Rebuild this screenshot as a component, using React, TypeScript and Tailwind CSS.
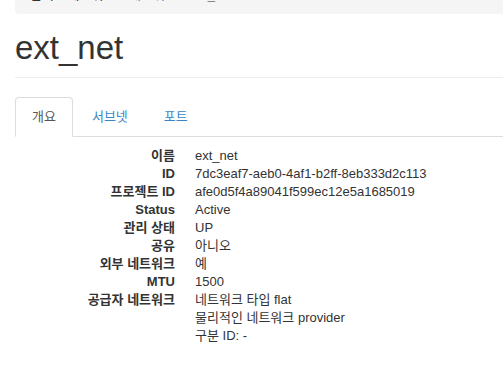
import React from 'react';

const rows: { label: string; values: string[] }[] = [
  { label: '이름', values: ['ext_net'] },
  { label: 'ID', values: ['7dc3eaf7-aeb0-4af1-b2ff-8eb333d2c113'] },
  { label: '프로젝트 ID', values: ['afe0d5f4a89041f599ec12e5a1685019'] },
  { label: 'Status', values: ['Active'] },
  { label: '관리 상태', values: ['UP'] },
  { label: '공유', values: ['아니오'] },
  { label: '외부 네트워크', values: ['예'] },
  { label: 'MTU', values: ['1500'] },
  {
    label: '공급자 네트워크',
    values: ['네트워크 타입 flat', '물리적인 네트워크 provider', '구분 ID: -'],
  },
];

const App: React.FC = () => {
  return (
    <div
      className="w-[503px] h-[390px] overflow-hidden bg-white pl-[15px] text-[13px] leading-[18px] text-[#333]"
      style={{ fontFamily: '"Liberation Sans", Arial, "Noto Sans CJK KR", sans-serif' }}
    >
      {/* breadcrumb, scrolled mostly out of view */}
      <div className="-mt-[22px] h-[36px] rounded-l-[4px] bg-[#f5f5f5] px-[15px] pt-[8px] whitespace-nowrap">
        <span>관리</span>
        <span className="px-[5px] text-[#ccc]">/</span>
        <span>네트워크</span>
        <span className="px-[5px] text-[#ccc]">/</span>
        <span className="text-[#3a87c8]">네트워크</span>
        <span className="px-[5px] text-[#ccc]">/</span>
        <span className="text-[#777]">ext_net</span>
      </div>

      <div className="mt-[16px] border-b border-[#eee] pb-[11px]">
        <h1 className="text-[33px] leading-[36px] font-normal text-[#333]">ext_net</h1>
      </div>

      <ul className="mt-[19px] flex border-b border-[#ddd]">
        <li className="-mb-px mr-[2px]">
          <span className="block rounded-t-[4px] border border-[#ddd] border-b-white bg-white px-[16px] py-[10px] leading-[18px] text-[#555]">
            개요
          </span>
        </li>
        <li className="-mb-px mr-[2px]">
          <span className="block border border-transparent px-[16px] py-[10px] leading-[18px] text-[#3a87c8]">
            서브넷
          </span>
        </li>
        <li className="-mb-px">
          <span className="block border border-transparent px-[16px] py-[10px] leading-[18px] text-[#3a87c8]">
            포트
          </span>
        </li>
      </ul>

      <dl className="mt-[10px]">
        {rows.map((r) => (
          <div key={r.label} className="flex">
            <dt className="w-[160px] shrink-0 text-right font-bold">{r.label}</dt>
            <dd className="ml-[20px]">
              {r.values.map((v) => (
                <div key={v}>{v}</div>
              ))}
            </dd>
          </div>
        ))}
      </dl>
    </div>
  );
};

export default App;
